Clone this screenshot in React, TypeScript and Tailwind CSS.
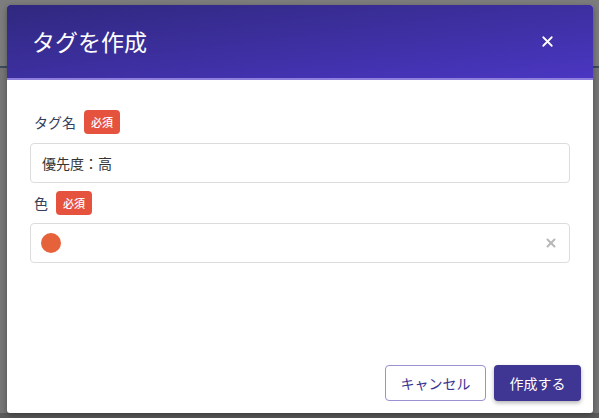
import { X } from 'lucide-react'

const font = { fontFamily: '"Noto Sans CJK JP", "Noto Sans", sans-serif' }

const RequiredBadge = () => (
  <span className="inline-flex h-6 items-center rounded bg-[#e5533f] px-[7px] text-[11px] font-medium text-white">
    必須
  </span>
)

export default function App() {
  return (
    <div
      className="relative h-[418px] w-[599px] overflow-hidden bg-[#767676]"
      style={font}
    >
      {/* page behind the overlay */}
      <div className="h-[68px] border-b-2 border-[#3d4b5e] bg-[#7d7d7d]" />
      <div className="absolute bottom-0 left-0 h-[5px] w-full bg-[#5a5a5a]" />

      <div className="absolute left-[7px] top-[5px] flex h-[408px] w-[586px] flex-col overflow-hidden rounded-[3px] bg-white shadow-[0_2px_6px_rgba(0,0,0,0.35)]">
        <header className="flex h-[75px] shrink-0 items-center justify-between border-b-2 border-[#8e80dc] bg-gradient-to-br from-[#30287f] to-[#4a36c2] pl-[25px] pr-[37px]">
          <h1 className="text-[23px] leading-none text-white">タグを作成</h1>
          <X className="h-[17px] w-[17px] text-white" strokeWidth={2.5} />
        </header>

        <div className="flex flex-1 flex-col px-[23px] pt-[30px]">
          <div className="flex items-center gap-[8px] pl-[4px]">
            <span className="text-[14px] text-[#34405a]">タグ名</span>
            <RequiredBadge />
          </div>
          <div className="mt-[9px] flex h-[40px] items-center rounded border border-[#dcdcdc] px-[11px] text-[14px] text-[#333]">
            優先度：高
          </div>

          <div className="mt-[8px] flex items-center gap-[8px] pl-[4px]">
            <span className="text-[14px] text-[#34405a]">色</span>
            <RequiredBadge />
          </div>
          <div className="mt-[8px] flex h-[40px] items-center justify-between rounded border border-[#dcdcdc] pl-[10px] pr-[11px]">
            <span className="h-[20px] w-[20px] rounded-full bg-[#e5623a]" />
            <X className="h-[14px] w-[14px] text-[#b8b8b8]" strokeWidth={3.5} />
          </div>

          <div className="mt-auto flex justify-end gap-[8px] pb-[12px]">
            <button className="h-[36px] w-[101px] rounded border border-[#9a90d4] bg-white text-[14px] text-[#3d3490]">
              キャンセル
            </button>
            <button className="mr-[-11px] h-[36px] w-[87px] rounded bg-[#3f3592] text-[14px] text-white shadow-[0_2px_4px_rgba(0,0,0,0.3)]">
              作成する
            </button>
          </div>
        </div>
      </div>
    </div>
  )
}
